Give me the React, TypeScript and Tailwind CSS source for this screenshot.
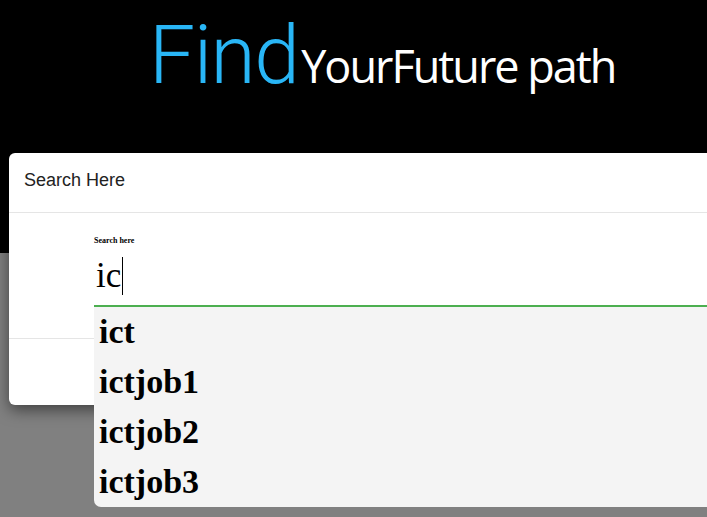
import React from "react"

const suggestions = ["ict", "ictjob1", "ictjob2", "ictjob3"]

const App = () => {
  return (
    <div className="relative w-[707px] h-[517px] overflow-hidden bg-[#808080]">
      <header className="h-[253px] bg-black pt-[14px] pl-[149px]">
        <h1 className="flex items-baseline leading-none">
          <span className="text-[82px] font-light tracking-[-1.5px] text-[#29b6f6] font-['Roboto',sans-serif]">
            Find
          </span>
          <span className="ml-[3px] text-[45px] text-white tracking-[-2px] font-['Open_Sans',sans-serif]">
            YourFuture path
          </span>
        </h1>
      </header>

      {/* modal */}
      <div className="absolute left-[9px] top-[153px] w-[740px] h-[252px] rounded-[6px] bg-white shadow-[0_5px_15px_rgba(0,0,0,0.5)] flex flex-col">
        <div className="h-[60px] px-[15px] pb-[4px] flex items-center border-b border-[#e5e5e5]">
          <h4 className="text-[18px] text-[#222] font-['Liberation_Sans',Arial,sans-serif]">
            Search Here
          </h4>
        </div>
        <div className="h-[126px] border-b border-[#e5e5e5] pl-[85px] pt-[23px] font-['Liberation_Serif','Times_New_Roman',serif]">
          <label className="block text-[8px] font-bold leading-[10px] text-black">
            Search here
          </label>
          <div className="mt-[6px] h-[55px] flex items-end border-b-2 border-[#4caf50]">
            <span className="text-[35px] leading-[40px] text-black pl-[2px] pb-[9px] flex items-center">
              ic
              <span className="ml-[1px] w-px h-[38px] bg-black" />
            </span>
          </div>
        </div>
      </div>

      {/* autocomplete dropdown */}
      <ul className="absolute left-[94px] top-[307px] w-[640px] rounded-bl-[7px] bg-[#f4f4f4] font-['Liberation_Serif','Times_New_Roman',serif]">
        {suggestions.map((s) => (
          <li key={s} className="h-[50px] pl-[5px] text-[34px] font-bold leading-[50px] text-black">
            {s}
          </li>
        ))}
      </ul>
    </div>
  )
}

export default App
